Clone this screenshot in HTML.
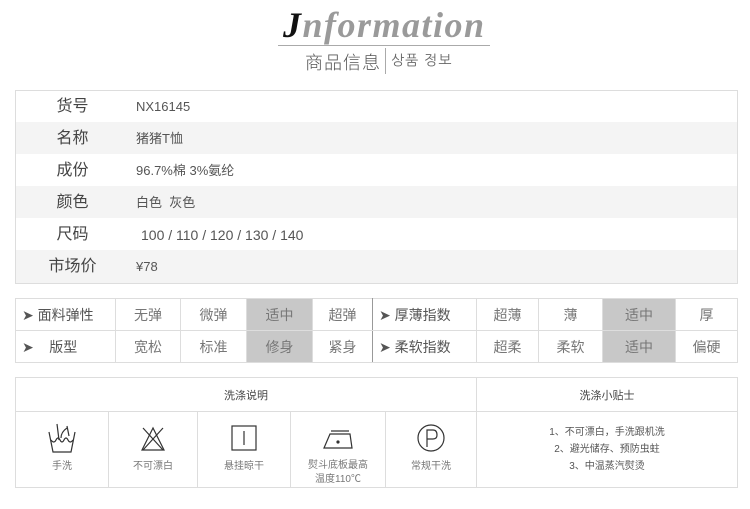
<!DOCTYPE html>
<html><head><meta charset="utf-8"><style>
*{margin:0;padding:0;box-sizing:border-box}
body{width:750px;height:509px;background:#fff;position:relative;font-family:"Liberation Sans","Noto Sans CJK SC",sans-serif;color:#555;overflow:hidden}
.abs{position:absolute}
table{border-collapse:collapse;position:absolute}
td{border:1px solid #ddd;text-align:center;font-size:14px;color:#777}
</style></head><body>
<div class="abs" style="left:283px;top:4px;font-family:'Liberation Serif',serif;font-style:italic;font-weight:bold;font-size:36px;color:#9a9a9a;letter-spacing:1.5px"><span style="color:#111">J</span>nformation</div>
<div class="abs" style="left:278px;top:45px;width:212px;height:1px;background:#aaa"></div>
<div class="abs" style="left:305px;top:49px;font-size:18px;color:#555;letter-spacing:1px;font-weight:300">商品信息</div>
<div class="abs" style="left:385px;top:48px;width:1px;height:26px;background:#aaa"></div>
<div class="abs" style="left:391px;top:52px;font-size:14px;color:#666;font-family:'NanumGothic','Noto Sans CJK KR',sans-serif;letter-spacing:1px">상품 정보</div>

<div class="abs" style="left:15px;top:90px;width:723px;height:194px;border:1px solid #ddd"></div>
<div class="abs" style="left:16px;top:122px;width:721px;height:32px;background:#f4f4f4"></div>
<div class="abs" style="left:16px;top:186px;width:721px;height:32px;background:#f4f4f4"></div>
<div class="abs" style="left:16px;top:250px;width:721px;height:33px;background:#f4f4f4"></div>
<div class="abs" style="left:0;top:91px;width:145px;font-size:16px;color:#444;line-height:32px;text-align:center">
<div>货号</div><div>名称</div><div>成份</div><div>颜色</div><div>尺码</div><div>市场价</div></div>
<div class="abs" style="left:136px;top:91px;font-size:13px;color:#555;line-height:32px">
<div>NX16145</div><div>猪猪T恤</div><div>96.7%棉 3%氨纶</div><div>白色&nbsp;&nbsp;灰色</div><div style="padding-left:5px;font-size:14px">100 / 110 / 120 / 130 / 140</div><div>¥78</div></div>

<table style="left:15px;top:298px;width:723px;height:64px">
<colgroup><col style="width:100px"><col style="width:65px"><col style="width:66px"><col style="width:66px"><col style="width:60px"><col style="width:104px"><col style="width:62px"><col style="width:64px"><col style="width:73px"><col></colgroup>
<tr style="height:32px"><td style="text-align:left;padding-left:6px;color:#555">➤ 面料弹性</td><td>无弹</td><td>微弹</td><td style="background:#c8c8c8">适中</td><td style="border-right:1px solid #999">超弹</td><td style="text-align:left;padding-left:6px;color:#555">➤ 厚薄指数</td><td>超薄</td><td>薄</td><td style="background:#c8c8c8">适中</td><td>厚</td></tr>
<tr style="height:32px"><td style="text-align:left;padding-left:6px;color:#555">➤&nbsp;&nbsp;&nbsp;&nbsp;版型</td><td>宽松</td><td>标准</td><td style="background:#c8c8c8">修身</td><td style="border-right:1px solid #999">紧身</td><td style="text-align:left;padding-left:6px;color:#555">➤ 柔软指数</td><td>超柔</td><td>柔软</td><td style="background:#c8c8c8">适中</td><td>偏硬</td></tr>
</table>

<table style="left:15px;top:377px;width:723px;height:111px">
<colgroup><col style="width:93px"><col style="width:89px"><col style="width:93px"><col style="width:95px"><col style="width:91px"><col></colgroup>
<tr style="height:34px"><td colspan="5" style="font-size:11px;color:#444">洗涤说明</td><td style="font-size:11px;color:#444">洗涤小贴士</td></tr>
<tr style="font-size:10px">
<td style="font-size:10px;vertical-align:top;padding-top:10px"><svg width="30" height="32" viewBox="0 0 30 32" fill="none" stroke="#333" stroke-width="1.2"><path d="M2 10 L6 30 H24 L28 10"/><path d="M4 18 Q7 22 9 18 Q11 14 13 18 Q15 22 17 18 Q19 14 21 18 Q23 22 26 18"/><path d="M10 2 L12 18 M14 16 Q14 10 20 6 M20 4 L22 14"/></svg><br>手洗</td>
<td style="font-size:10px;vertical-align:top;padding-top:10px"><svg width="30" height="32" viewBox="0 0 30 32" fill="none" stroke="#333" stroke-width="1.2"><path d="M15 6 L4 28 H26 Z"/><path d="M5 6 L25 28 M25 6 L5 28"/></svg><br>不可漂白</td>
<td style="font-size:10px;vertical-align:top;padding-top:10px"><svg width="30" height="32" viewBox="0 0 30 32" fill="none" stroke="#333" stroke-width="1.2"><rect x="3" y="4" width="24" height="24"/><path d="M15 9 V23"/></svg><br>悬挂晾干</td>
<td style="font-size:10px;vertical-align:top;padding-top:10px;line-height:14px"><svg width="34" height="32" viewBox="0 0 34 32" fill="none" stroke="#333" stroke-width="1.2"><path d="M3 26 L9 12 H29 L31 26 Z"/><path d="M10 9 H28"/><circle cx="17" cy="20" r="1" fill="#333"/></svg><br>熨斗底板最高<br>温度110℃</td>
<td style="font-size:10px;vertical-align:top;padding-top:10px"><svg width="32" height="32" viewBox="0 0 32 32" fill="none" stroke="#333" stroke-width="1.2"><circle cx="16" cy="16" r="13"/><path d="M12 25 V8 H18 Q22 8 22 13 Q22 17 18 17 H12"/></svg><br>常规干洗</td>
<td style="font-size:10px;color:#555;line-height:17px">1、不可漂白，手洗跟机洗<br>2、避光储存、预防虫蛀<br>3、中温蒸汽熨烫</td>
</tr></table>
</body></html>
